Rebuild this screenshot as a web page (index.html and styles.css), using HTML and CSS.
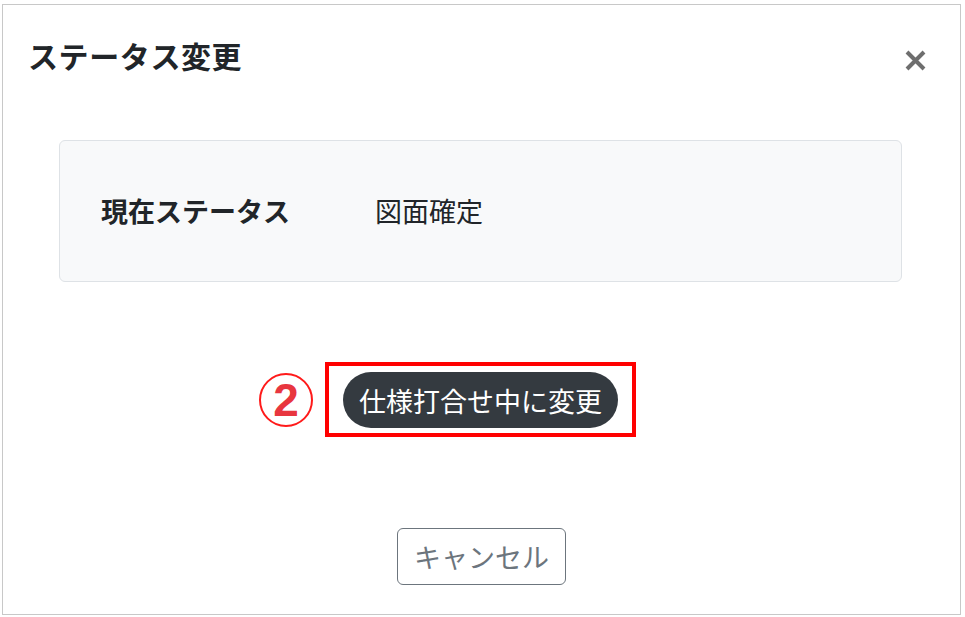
FILE: index.html
```html
<!DOCTYPE html>
<html lang="ja">
<head>
    <meta charset="UTF-8">
    <meta name="viewport" content="width=device-width, initial-scale=1.0">
    <title>ステータス変更</title>
    <link rel="stylesheet" href="styles.css">
</head>
<body>
    <div class="modal">
        <div class="modal-header">
            <h5 class="modal-title">ステータス変更</h5>
            <button type="button" class="btn-close" aria-label="Close">
                <svg width="21" height="21" viewBox="0 0 21 21">
                    <path d="M2 2 L19 19 M19 2 L2 19" stroke="#6e6e6e" stroke-width="4" fill="none"/>
                </svg>
            </button>
        </div>

        <div class="modal-body">
            <div class="status-card">
                <span class="status-label">現在ステータス</span>
                <span class="status-value">図面確定</span>
            </div>

            <div class="action-row">
                <div class="highlight">
                    <span class="step-mark">2</span>
                    <button type="button" class="btn-change">仕様打合せ中に変更</button>
                </div>
            </div>
        </div>

        <div class="modal-footer">
            <button type="button" class="btn-cancel">キャンセル</button>
        </div>
    </div>
</body>
</html>
```

FILE: styles.css
```css
/* General Styles */
body {
    font-family: 'Noto Sans CJK JP', 'Noto Sans', sans-serif;
    margin: 0;
    padding: 0;
    background-color: #fff;
    color: #212529;
}

button {
    font-family: inherit;
    cursor: pointer;
}

.modal {
    box-sizing: border-box;
    width: 959px;
    height: 611px;
    margin: 4px 0 0 2px;
    border: 1px solid #c8c8c8;
    display: flex;
    flex-direction: column;
}

/* Header */
.modal-header {
    display: flex;
    justify-content: space-between;
    align-items: flex-start;
    padding: 32px 34px 0 25px;
}

.modal-title {
    margin: 0;
    font-size: 30px;
    line-height: 36px;
    font-weight: 700;
    letter-spacing: 0.6px;
    color: #212529;
}

.btn-close {
    background: none;
    border: none;
    padding: 0;
    margin-top: 13px;
    width: 21px;
    height: 21px;
    display: flex;
}

/* Body */
.modal-body {
    padding: 0 58px 0 56px;
    margin-top: 67px;
}

.status-card {
    display: grid;
    grid-template-columns: 274px 1fr;
    align-items: center;
    padding: 50px 41px;
    background-color: #f8f9fa;
    border: 1px solid #dee2e6;
    border-radius: 6px;
    font-size: 27px;
    line-height: 40px;
}

.status-label {
    font-weight: 700;
}

.action-row {
    display: flex;
    justify-content: center;
    margin-top: 80px;
}

.highlight {
    position: relative;
    display: flex;
    padding: 6px 14px 5px;
    border: 4px solid #ff0000;
}

.step-mark {
    position: absolute;
    left: -70px;
    top: 50%;
    transform: translateY(-50%);
    box-sizing: border-box;
    width: 54px;
    height: 54px;
    border: 2px solid #ff1a1a;
    border-radius: 50%;
    display: flex;
    align-items: center;
    justify-content: center;
    color: #e8363f;
    font-family: 'Liberation Sans', Arial, sans-serif;
    font-size: 46px;
    font-weight: 700;
}

.btn-change {
    height: 56px;
    padding: 0 16px;
    border: none;
    border-radius: 28px;
    background-color: #343a40;
    color: #fff;
    font-size: 27px;
}

/* Footer */
.modal-footer {
    display: flex;
    justify-content: center;
    margin-top: 91px;
}

.btn-cancel {
    height: 57px;
    padding: 0 16px;
    background-color: #fff;
    border: 1px solid #6c757d;
    border-radius: 6px;
    color: #6c757d;
    font-size: 27px;
}
```
